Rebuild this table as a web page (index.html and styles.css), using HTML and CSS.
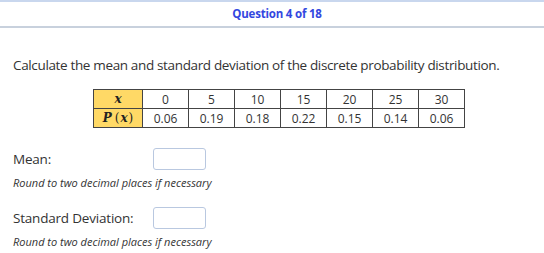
FILE: index.html
```html
<!DOCTYPE html>
<html>
<head>
<meta charset="utf-8">
<link rel="stylesheet" href="styles.css">
</head>
<body>
<div class="header">Question 4 of 18</div>
<div class="content">
  <p class="question">Calculate the mean and standard deviation of the discrete probability distribution.</p>
  <table class="dist">
    <tr>
      <th class="var"><span class="math">x</span></th>
      <td>0</td><td>5</td><td>10</td><td>15</td><td>20</td><td>25</td><td>30</td>
    </tr>
    <tr>
      <th class="var"><span class="math">P</span><span class="paren">(</span><span class="math">x</span><span class="paren">)</span></th>
      <td>0.06</td><td>0.19</td><td>0.18</td><td>0.22</td><td>0.15</td><td>0.14</td><td>0.06</td>
    </tr>
  </table>
  <div class="field">
    <div class="row"><span class="label">Mean:</span><span class="box"></span></div>
    <div class="hint">Round to two decimal places if necessary</div>
  </div>
  <div class="field">
    <div class="row"><span class="label">Standard Deviation:</span><span class="box"></span></div>
    <div class="hint">Round to two decimal places if necessary</div>
  </div>
</div>
</body>
</html>
```

FILE: styles.css
```css
html, body {
  margin: 0;
  padding: 0;
  background: #ffffff;
}
body {
  font-family: "Open Sans", "Noto Sans", sans-serif;
  color: #333;
}
.header {
  border-top: 2px solid #c9d7ee;
  border-bottom: 2px solid #c8d1dd;
  height: 24px;
  line-height: 24px;
  text-align: center;
  font-size: 11.5px;
  font-weight: bold;
  color: #3347e0;
  letter-spacing: -0.2px;
  padding-left: 10px;
}
.content {
  padding-left: 13px;
}
.question {
  margin: 28px 0 0 0;
  font-size: 13.5px;
  line-height: 19px;
  color: #333;
  letter-spacing: -0.35px;
}
.dist {
  border-collapse: collapse;
  margin: 14px 0 0 80px;
  font-size: 12px;
}
.dist td, .dist th {
  border: 1px solid #444;
  height: 18px;
  padding: 0;
  text-align: center;
  width: 45px;
  color: #333;
  font-weight: normal;
}
.dist th.var {
  background: #ffd966;
  width: 48px;
  font-family: "DejaVu Serif", "Liberation Serif", serif;
  font-size: 12px;
  color: #222;
}
.math {
  font-style: italic;
  font-weight: bold;
}
.paren {
  font-weight: normal;
  margin: 0 1px 0 3px;
}
.paren + .math + .paren {
  margin: 0 0 0 1px;
}
.field {
  margin-top: 20px;
}
.field + .field {
  margin-top: 17px;
}
.row {
  display: flex;
  align-items: center;
  height: 22px;
}
.label {
  width: 140px;
  font-size: 13.5px;
  color: #333;
  letter-spacing: -0.2px;
}
.box {
  width: 51px;
  height: 20px;
  border: 1px solid #b9c8e0;
  border-radius: 3px;
  background: #fff;
}
.hint {
  margin-top: 5px;
  font-size: 11px;
  font-style: italic;
  color: #333;
}
```
